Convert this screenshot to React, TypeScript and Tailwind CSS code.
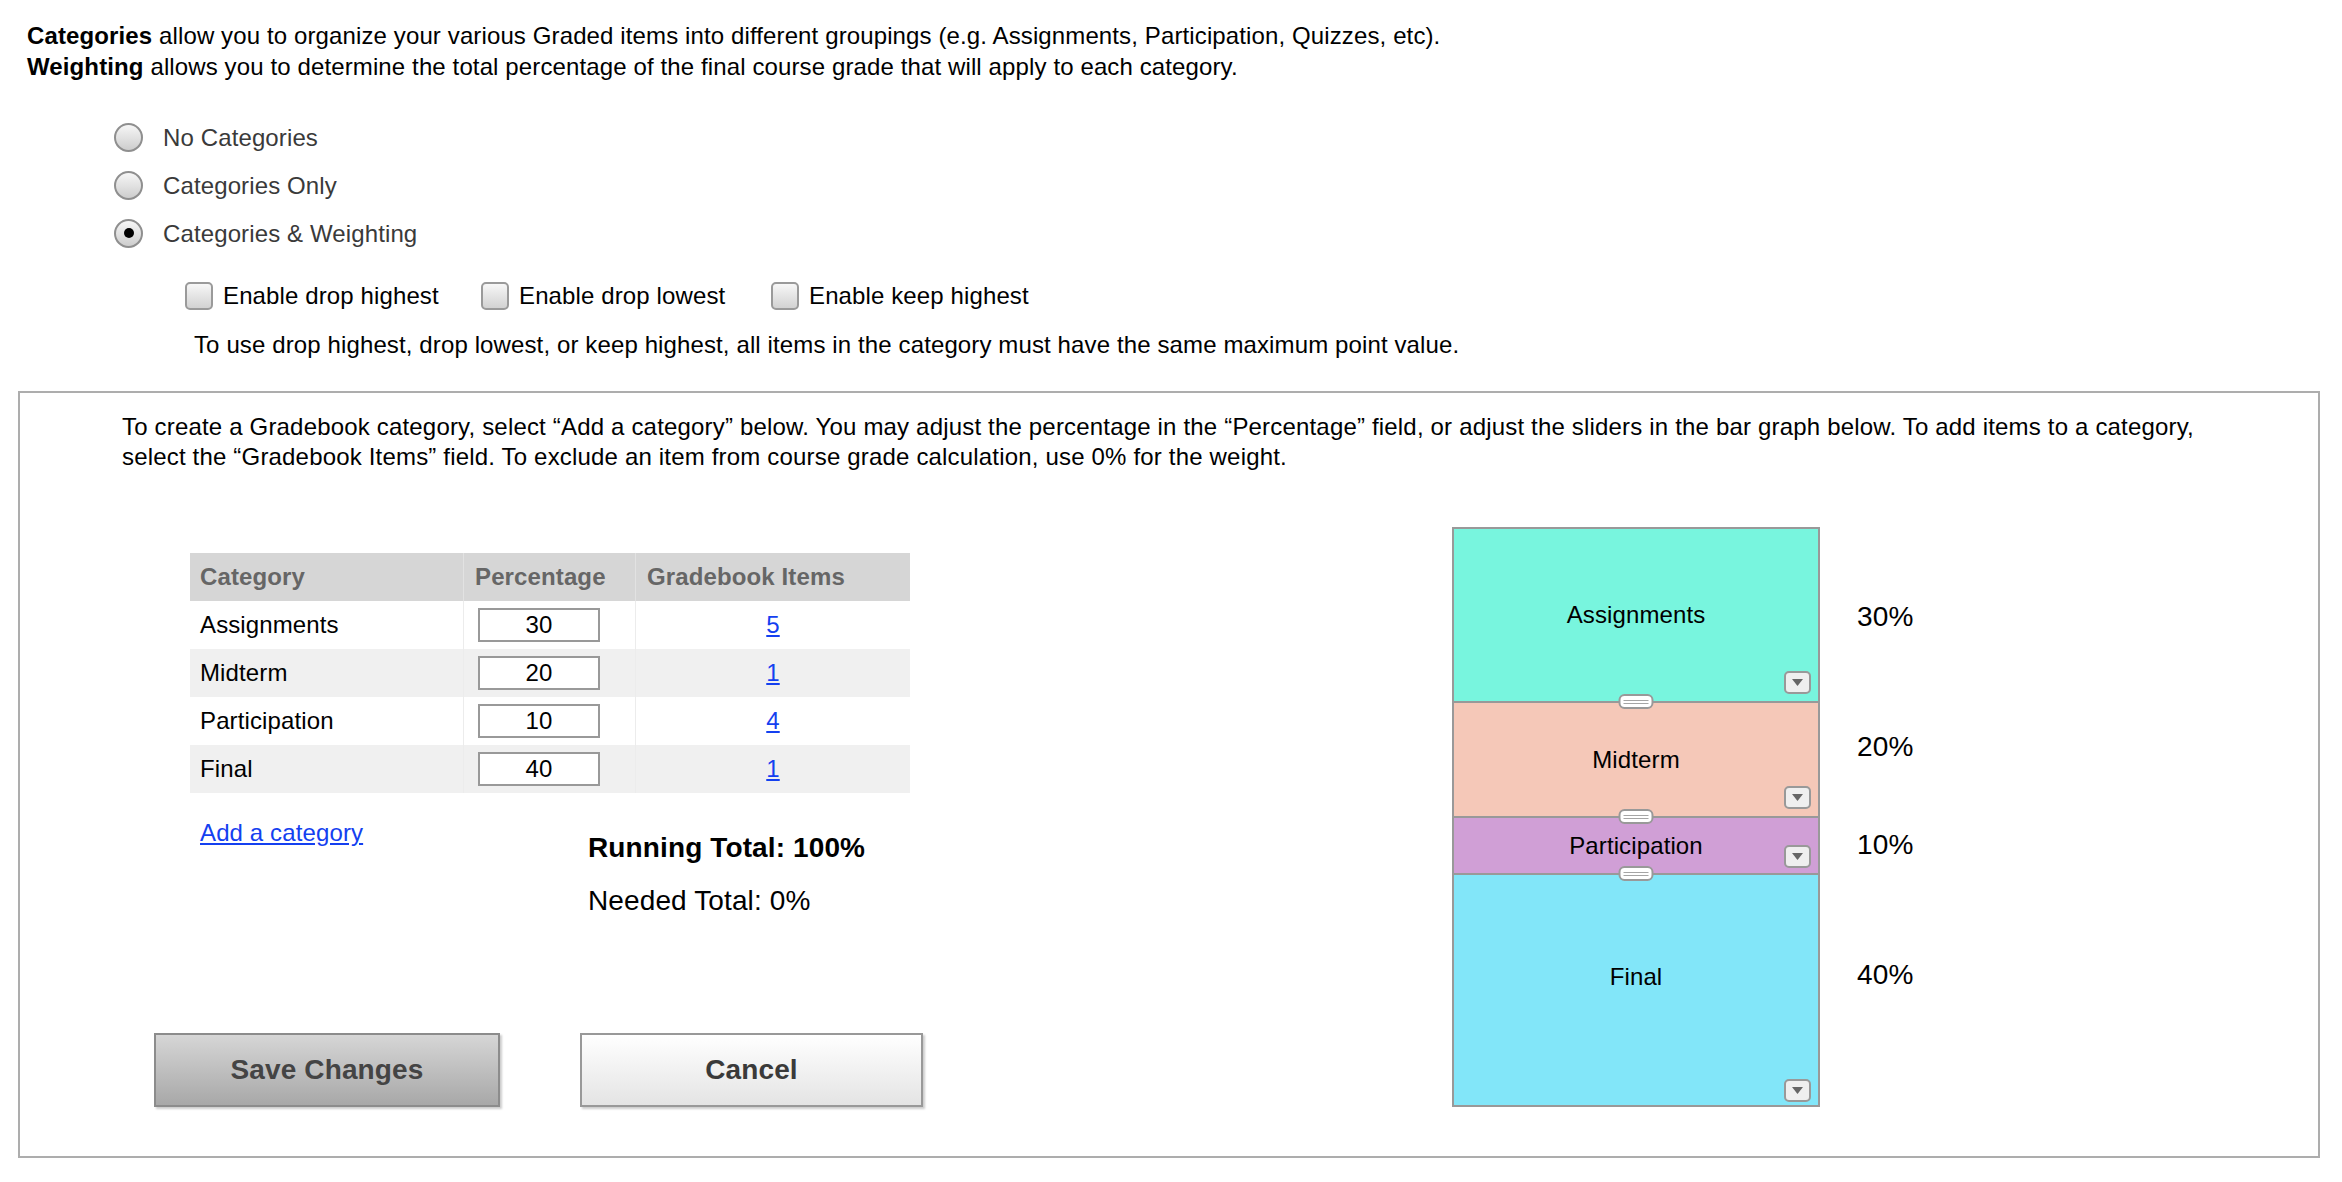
import React from "react";

function Radio({ checked, label }: { checked?: boolean; label: string }) {
  return (
    <div className="flex h-[48px] items-center">
      <span className="flex h-[29px] w-[29px] items-center justify-center rounded-full border-2 border-[#8f8f8f] bg-linear-to-b from-[#f6f6f6] via-[#e2e2e2] to-[#cdcdcd]">
        {checked && <span className="h-[10px] w-[10px] rounded-full bg-black" />}
      </span>
      <span className="ml-[20px] pt-[2px] text-[#3a3a3a]">{label}</span>
    </div>
  );
}

function Checkbox({ label, w }: { label: string; w: string }) {
  return (
    <div className={`flex items-center ${w}`}>
      <span className="h-[28px] w-[28px] rounded-[5px] border-2 border-[#9a9a9a] bg-linear-to-b from-[#f7f7f7] to-[#d2d2d2]" />
      <span className="ml-[10px] text-black">{label}</span>
    </div>
  );
}

function Handle() {
  return (
    <div className="absolute -bottom-[8px] left-1/2 z-10 flex h-[15px] w-[35px] -translate-x-1/2 flex-col items-center justify-center gap-[2px] rounded-[6px] border-2 border-[#999] bg-white">
      <span className="h-[1px] w-[25px] bg-[#a5a5a5]" />
      <span className="h-[1px] w-[25px] bg-[#a5a5a5]" />
    </div>
  );
}

function Drop({ bottom }: { bottom: string }) {
  return (
    <div
      className={`absolute right-[7px] ${bottom} flex h-[23px] w-[27px] items-center justify-center rounded-[5px] border-2 border-[#999] bg-[#efefef]`}
    >
      <svg width="11" height="7" viewBox="0 0 11 7">
        <polygon points="0,0 11,0 5.5,7" fill="#666" />
      </svg>
    </div>
  );
}

const rows = [
  { name: "Assignments", pct: "30", items: "5", bg: "bg-white" },
  { name: "Midterm", pct: "20", items: "1", bg: "bg-[#f0f0f0]" },
  { name: "Participation", pct: "10", items: "4", bg: "bg-white" },
  { name: "Final", pct: "40", items: "1", bg: "bg-[#f0f0f0]" },
];

export default function App() {
  return (
    <div className="h-[1182px] w-[2342px] overflow-hidden bg-white font-['Liberation_Sans',Arial,sans-serif] text-[24px] tracking-[0.12px] text-black">
      <div className="ml-[27px] pt-[20px] leading-[31px]">
        <div>
          <b>Categories</b> allow you to organize your various Graded items into different groupings (e.g. Assignments, Participation, Quizzes, etc).
        </div>
        <div>
          <b>Weighting</b> allows you to determine the total percentage of the final course grade that will apply to each category.
        </div>
      </div>

      <div className="ml-[114px] mt-[31px]">
        <Radio label="No Categories" />
        <Radio label="Categories Only" />
        <Radio label="Categories & Weighting" checked />
      </div>

      <div className="ml-[185px] mt-[15px] flex h-[48px] items-center">
        <Checkbox label="Enable drop highest" w="w-[296px]" />
        <Checkbox label="Enable drop lowest" w="w-[290px]" />
        <Checkbox label="Enable keep highest" w="w-[300px]" />
      </div>

      <div className="ml-[194px] mt-[10px] leading-[30px]">
        To use drop highest, drop lowest, or keep highest, all items in the category must have the same maximum point value.
      </div>

      <div className="ml-[18px] mt-[31px] h-[767px] w-[2302px] border-2 border-[#adadad]">
        <div className="pl-[102px] pt-[19px] leading-[30px] tracking-[0.18px]">
          To create a Gradebook category, select “Add a category” below. You may adjust the percentage in the “Percentage” field, or adjust the sliders in the bar graph below. To add items to a category,
          <br />
          select the “Gradebook Items” field. To exclude an item from course grade calculation, use 0% for the weight.
        </div>

        <div className="mt-[55px] flex items-start pl-[134px]">
          <div className="flex w-[769px] flex-col">
            <div className="ml-[36px] mt-[26px] w-[720px]">
              <div className="flex h-[48px] bg-[#d6d6d6] font-bold text-[#666]">
                <div className="flex w-[273px] items-center pl-[10px]">Category</div>
                <div className="flex w-[172px] items-center border-l border-[#e2e2e2] pl-[11px]">Percentage</div>
                <div className="flex w-[275px] items-center border-l border-[#e2e2e2] pl-[11px]">Gradebook Items</div>
              </div>
              {rows.map((r) => (
                <div key={r.name} className={`flex h-[48px] ${r.bg}`}>
                  <div className="flex w-[273px] items-center pl-[10px]">{r.name}</div>
                  <div className="flex w-[172px] items-center border-l border-[#ececec] pl-[14px]">
                    <div className="flex h-[34px] w-[122px] items-center justify-center border-2 border-[#999] bg-white">
                      {r.pct}
                    </div>
                  </div>
                  <div className="flex w-[275px] items-center justify-center border-l border-[#ececec]">
                    <a href="#" className="text-[#1440f0] underline">
                      {r.items}
                    </a>
                  </div>
                </div>
              ))}
            </div>

            <div className="mt-[25px] flex items-start">
              <div className="w-[434px] pl-[46px] leading-[30px]">
                <a href="#" className="text-[#1440f0] underline">
                  Add a category
                </a>
              </div>
              <div className="flex flex-col text-[28px] leading-[34px]">
                <div className="mt-[13px] font-bold">Running Total: 100%</div>
                <div className="mt-[19px]">Needed Total: 0%</div>
              </div>
            </div>

            <div className="mt-[115px] flex gap-[80px]">
              <button className="h-[74px] w-[346px] border-2 border-[#8c8c8c] bg-linear-to-b from-[#d6d6d6] to-[#a8a8a8] text-[28px] font-bold text-[#444] shadow-[2px_2px_2px_rgba(0,0,0,0.2)]">
                Save Changes
              </button>
              <button className="h-[74px] w-[343px] border-2 border-[#999] bg-linear-to-b from-[#ffffff] to-[#e4e4e4] text-[28px] font-bold text-[#3a3a3a] shadow-[2px_2px_2px_rgba(0,0,0,0.2)]">
                Cancel
              </button>
            </div>
          </div>

          <div className="ml-[529px] h-[580px] w-[368px] border-2 border-[#999]">
            <div className="relative flex h-[172px] items-center justify-center bg-[#78f5de]">
              <span>Assignments</span>
              <Drop bottom="bottom-[7px]" />
              <Handle />
            </div>
            <div className="relative flex h-[115px] items-center justify-center border-t-2 border-[#999] bg-[#f5c8b8]">
              <span>Midterm</span>
              <Drop bottom="bottom-[7px]" />
              <Handle />
            </div>
            <div className="relative flex h-[57px] items-center justify-center border-t-2 border-[#999] bg-[#d09fd6]">
              <span>Participation</span>
              <Drop bottom="bottom-[5px]" />
              <Handle />
            </div>
            <div className="relative flex h-[232px] items-center justify-center border-t-2 border-[#999] bg-[#82e6f9] pb-[26px]">
              <span>Final</span>
              <Drop bottom="bottom-[3px]" />
            </div>
          </div>

          <div className="ml-[37px] flex flex-col text-[28px] leading-[32px]">
            <div className="mt-[74px]">30%</div>
            <div className="mt-[98px]">20%</div>
            <div className="mt-[66px]">10%</div>
            <div className="mt-[98px]">40%</div>
          </div>
        </div>
      </div>
    </div>
  );
}
